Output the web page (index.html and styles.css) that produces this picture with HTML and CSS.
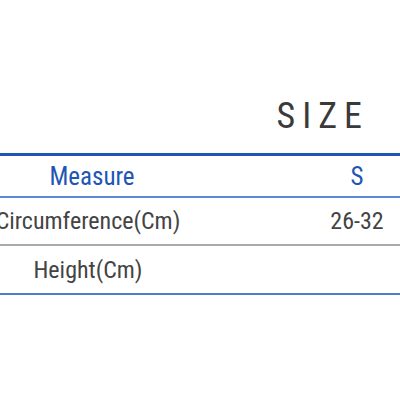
FILE: index.html
```html
<!DOCTYPE html>
<html>
<head>
<meta charset="utf-8">
<link rel="stylesheet" href="styles.css">
</head>
<body>
<div class="page">
  <div class="title-row"><span class="title">SIZE</span></div>
  <div class="table">
    <div class="row head">
      <div class="c1">Measure</div>
      <div class="c2">S</div>
    </div>
    <div class="row r1">
      <div class="c1">Circumference(Cm)</div>
      <div class="c2">26-32</div>
    </div>
    <div class="row r2">
      <div class="c1">Height(Cm)</div>
      <div class="c2"></div>
    </div>
  </div>
</div>
</body>
</html>
```
FILE: styles.css
```css
html, body {
  margin: 0;
  padding: 0;
  background: #ffffff;
}
.page {
  width: 400px;
  height: 400px;
  font-family: "Roboto Condensed", "DejaVu Sans Condensed", "Liberation Sans Narrow", Roboto, sans-serif;
  font-weight: 400;
}
.title-row {
  height: 153px;
  box-sizing: border-box;
  padding-top: 95px;
  display: flex;
  justify-content: flex-end;
  padding-right: 31px;
}
.title {
  font-size: 36px;
  line-height: 42px;
  letter-spacing: 7px;
  color: #3a3a3a;
}
.table {
  border-top: 3px solid #1f55b5;
}
.row {
  display: flex;
  align-items: center;
}
.head {
  height: 40px;
  border-bottom: 2px solid #5a8ad0;
  color: #1f55b5;
  font-size: 25px;
}
.r1 {
  height: 46px;
  border-bottom: 2px solid #aaaaaa;
  color: #444444;
  font-size: 24px;
}
.r2 {
  height: 47px;
  border-bottom: 2px solid #4a7dcc;
  color: #444444;
  font-size: 24px;
}
.c1 {
  width: 176px;
  white-space: nowrap;
  display: flex;
  justify-content: center;
}
.head .c1 {
  width: 184px;
}
.c2 {
  margin-left: auto;
  width: 60px;
  margin-right: 13px;
  text-align: center;
}
```
